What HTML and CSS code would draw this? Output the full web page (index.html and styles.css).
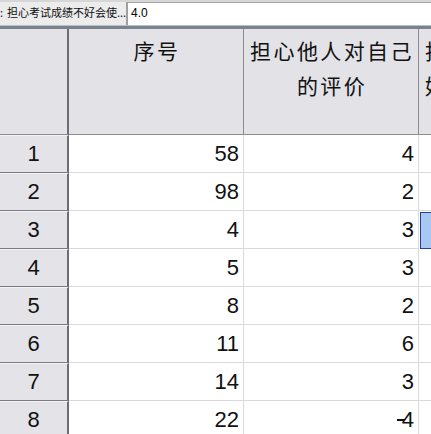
FILE: index.html
```html
<!DOCTYPE html>
<html lang="zh">
<head>
<meta charset="utf-8">
<link rel="stylesheet" href="styles.css">
</head>
<body>
<div class="topbar">
  <div class="label"><span class="colon">:</span>担心考试成绩不好会使...</div>
  <div class="input">4.0</div>
</div>
<div class="band"></div>
<div class="viewport">
<div class="grid">
  <div class="hd corner"></div>
  <div class="hd">序号</div>
  <div class="hd">担心他人对自己的评价</div>
  <div class="hd">担心考试成绩不好会使父母失望</div>

  <div class="rh">1</div><div class="cell">58</div><div class="cell">4</div><div class="cell"></div>
  <div class="rh">2</div><div class="cell">98</div><div class="cell">2</div><div class="cell"></div>
  <div class="rh">3</div><div class="cell">4</div><div class="cell">3</div><div class="cell sel"></div>
  <div class="rh">4</div><div class="cell">5</div><div class="cell">3</div><div class="cell"></div>
  <div class="rh">5</div><div class="cell">8</div><div class="cell">2</div><div class="cell"></div>
  <div class="rh">6</div><div class="cell">11</div><div class="cell">6</div><div class="cell"></div>
  <div class="rh">7</div><div class="cell">14</div><div class="cell">3</div><div class="cell"></div>
  <div class="rh">8</div><div class="cell">22</div><div class="cell"><span class="dash"></span>4</div><div class="cell"></div>
</div>
</div>
</body>
</html>
```
FILE: styles.css
```css
html, body {
  margin: 0;
  padding: 0;
  background: #ffffff;
  overflow: hidden;
  width: 431px;
  height: 434px;
}
body {
  font-family: "Liberation Sans", "Noto Sans CJK SC", sans-serif;
}
.topbar {
  display: flex;
  height: 23px;
  padding-top: 2px;
  background: #d6d6d6;
}
.label {
  width: 128px;
  background: #ececec;
  border-right: 2px solid #a0a0a0;
  font-family: "Noto Sans CJK SC", sans-serif;
  font-size: 11px;
  line-height: 21px;
  color: #111;
  white-space: nowrap;
  overflow: hidden;
  box-sizing: border-box;
  letter-spacing: 0;
}
.colon {
  display: inline-block;
  width: 7px;
}
.input {
  flex: 1;
  background: #ffffff;
  border-top: 1px solid #a8a8a8;
  font-family: "Liberation Sans", sans-serif;
  font-size: 12px;
  line-height: 20px;
  padding-left: 3px;
  color: #000;
}
.band {
  height: 3px;
  background: #7a828c;
  border-top: 1px solid #b8bec6;
}
.viewport {
  width: 431px;
  overflow: hidden;
}
.grid {
  display: grid;
  grid-template-columns: 69px 175px 175px 175px;
  grid-template-rows: 106px repeat(8, 38px);
  width: 594px;
}
.hd {
  background: #e2e2e7;
  border-right: 1px solid #8c8c90;
  border-bottom: 1px solid #8c8c90;
  font-family: "Noto Sans CJK SC", sans-serif;
  font-size: 21px;
  letter-spacing: 2.4px;
  line-height: 35px;
  text-align: center;
  padding: 4px 2px 0 4px;
  color: #111;
  overflow: hidden;
  box-sizing: border-box;
}
.hd.corner {
  border-right: 2px solid #6e6e72;
}
.rh {
  background: #e3e3e8;
  border-right: 2px solid #6e6e72;
  border-bottom: 1px solid #7c7c80;
  border-top: 1px solid #f4f4f6;
  box-sizing: border-box;
  text-align: center;
  font-size: 22px;
  line-height: 36px;
  color: #111;
}
.cell {
  background: #ffffff;
  border-right: 1px solid #dadada;
  border-bottom: 1px solid #dadada;
  box-sizing: border-box;
  text-align: right;
  padding-right: 4px;
  font-size: 22px;
  line-height: 37px;
  color: #111;
  position: relative;
}
.cell.sel {
  background: #a9c8f1;
  border: 1px solid #2b3c9c;
  margin: 1px 0 0 1px;
}
.dash {
  position: absolute;
  right: 13px;
  top: 18px;
  width: 8px;
  height: 2px;
  background: #111;
}
```
